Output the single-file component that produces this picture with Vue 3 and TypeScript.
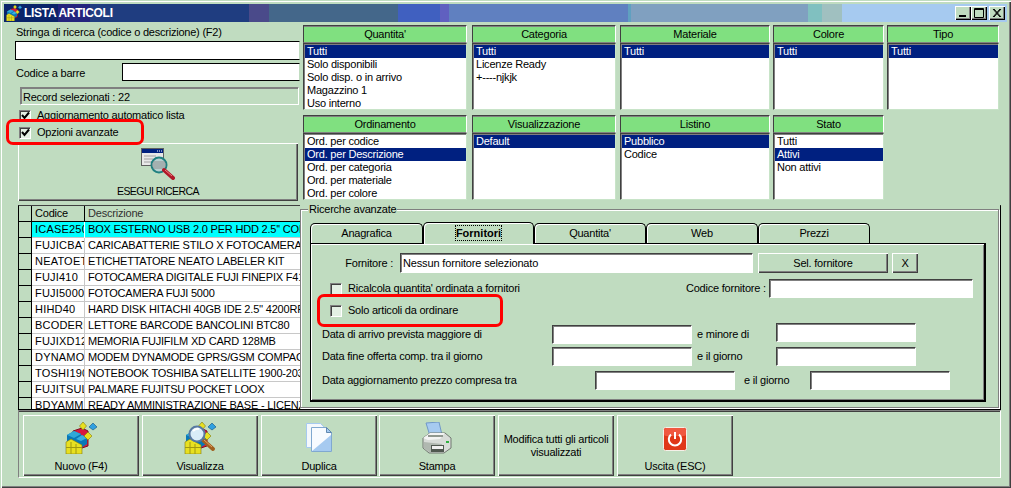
<script setup lang="ts">
const segments: [number, string][] = [
  [54, '#0a246a'], [32, '#24247e'], [159, '#1f3d80'], [20, '#4a4a8a'], [129, '#44678a'],
  [42, '#4060c0'], [9, '#6060c0'], [179, '#6080c0'], [3, '#60a0c0'], [177, '#80a0c0'],
  [14, '#80c0c0'], [20, '#a0c0c0'], [165, '#a6caf0']
]

interface Lista { title: string; width: number; gap: number; items: string[]; sel: number }
const topRow: Lista[] = [
  { title: "Quantita'", width: 164, gap: 5, sel: 0, items: ['Tutti', 'Solo disponibili', 'Solo disp. o in arrivo', 'Magazzino 1', 'Uso interno'] },
  { title: 'Categoria', width: 144, gap: 4, sel: 0, items: ['Tutti', 'Licenze Ready', '+----njkjk'] },
  { title: 'Materiale', width: 150, gap: 3, sel: 0, items: ['Tutti'] },
  { title: 'Colore', width: 111, gap: 3, sel: 0, items: ['Tutti'] },
  { title: 'Tipo', width: 112, gap: 0, sel: 0, items: ['Tutti'] }
]
const bottomRow: Lista[] = [
  { title: 'Ordinamento', width: 164, gap: 5, sel: 1, items: ['Ord. per codice', 'Ord. per Descrizione', 'Ord. per categoria', 'Ord. per materiale', 'Ord. per colore'] },
  { title: 'Visualizzazione', width: 144, gap: 4, sel: 0, items: ['Default'] },
  { title: 'Listino', width: 150, gap: 3, sel: 0, items: ['Pubblico', 'Codice'] },
  { title: 'Stato', width: 111, gap: 0, sel: 1, items: ['Tutti', 'Attivi', 'Non attivi'] }
]

const rows: [string, string][] = [
  ['ICASE250', "BOX ESTERNO USB 2.0 PER HDD 2.5'' CON CAVO"],
  ['FUJICBAT', 'CARICABATTERIE STILO X FOTOCAMERA FUJI'],
  ['NEATOET', 'ETICHETTATORE NEATO LABELER KIT'],
  ['FUJI410', 'FOTOCAMERA DIGITALE FUJI FINEPIX F410'],
  ['FUJI5000', 'FOTOCAMERA FUJI 5000'],
  ['HIHD40', "HARD DISK HITACHI 40GB IDE 2.5'' 4200RPM"],
  ['BCODERI', 'LETTORE BARCODE BANCOLINI BTC80'],
  ['FUJIXD12', 'MEMORIA FUJIFILM XD CARD 128MB'],
  ['DYNAMO', 'MODEM DYNAMODE GPRS/GSM COMPACT'],
  ['TOSHI190', 'NOTEBOOK TOSHIBA SATELLITE 1900-203'],
  ['FUJITSUL', 'PALMARE FUJITSU POCKET LOOX'],
  ['BDYAMM', 'READY AMMINISTRAZIONE BASE - LICENZA']
]

const tabs: [string, number][] = [['Anagrafica', 113], ['Fornitori', 111], ["Quantita'", 112], ['Web', 112], ['Prezzi', 112]]
</script>

<template>
  <div class="win">
    <svg class="defs" width="0" height="0">
      <defs>
        <symbol id="cubes" viewBox="0 0 32 32">
          <polygon points="8,9 17,6 23,9 23,24 17,26 8,20" fill="#d81840" stroke="#801020" stroke-width="1"/>
          <polygon points="2,13 9,9 16,12 16,21 9,25 2,21" fill="#0878b8"/>
          <polygon points="2,13 9,9 16,12 9,16" fill="#30a8d8"/>
          <polygon points="11,17 17,13 22,16 22,22 16,26 11,22" fill="#0878b8"/>
          <polygon points="11,17 17,13 22,16 16,19" fill="#38b0e0"/>
          <polygon points="1,20 6,17 17,23 17,32 1,32" fill="#e8e020" stroke="#807810" stroke-width="0.6"/>
          <path d="M1 25.500H17M6 20V32M11 22V32" stroke="#a09810" fill="none"/>
          <polygon points="18,0 21.500,4 18,8 14.500,4" fill="#e8e020" stroke="#807810" stroke-width="0.6"/>
          <polygon points="28,1 32,5 28,8 24,5" fill="#30a0e0" stroke="#105080" stroke-width="0.6"/>
          <polygon points="23,10 27,14 23,18 19,14" fill="#e8e020" stroke="#807810" stroke-width="0.6"/>
        </symbol>
      </defs>
    </svg>

    <header class="title">
      <div class="title-bg">
        <i v-for="(s, i) in segments" :key="i" :style="{ width: s[0] + 'px', background: s[1] }"></i>
      </div>
      <svg class="title-ico" width="16" height="16"><use href="#cubes"/></svg>
      <span class="title-text">LISTA ARTICOLI</span>
      <div class="ctrls">
        <button class="ctrl"><svg width="14" height="12"><rect x="3" y="8" width="7" height="2" fill="#000"/></svg></button>
        <button class="ctrl"><svg width="14" height="12"><path d="M2.500 1.500h9v9h-9zM2 2.500h10" fill="none" stroke="#000"/></svg></button>
        <button class="ctrl x"><svg width="14" height="12"><path d="M3 2l7 8M4 2l7 8M10 2l-7 8M11 2l-7 8" stroke="#000" fill="none"/></svg></button>
      </div>
    </header>

    <div class="upper">
      <section class="left">
        <label class="lbl-search">Stringa di ricerca (codice o descrizione) (F2)</label>
        <input class="field search" />
        <div class="barcode">
          <label>Codice a barre</label>
          <input class="field code" />
        </div>
        <div class="status">Record selezionati : 22</div>
        <div class="chk-line first"><span class="chk on"><svg width="9" height="9"><path d="M1 4l2.500 3L8 1.500" fill="none" stroke="#000" stroke-width="2"/></svg></span>Aggiornamento automatico lista</div>
        <div class="chk-line second"><span class="chk on"><svg width="9" height="9"><path d="M1 4l2.500 3L8 1.500" fill="none" stroke="#000" stroke-width="2"/></svg></span>Opzioni avanzate</div>
        <button class="raised search-btn">
          <svg width="34" height="32" viewBox="0 0 34 32">
            <rect x="0.500" y="0.500" width="22" height="17" fill="#e8e8e8" stroke="#606060"/>
            <rect x="1" y="1" width="21" height="4" fill="#002080"/>
            <path d="M16 3h1M18 3h1M20 3h1" stroke="#fff"/>
            <path d="M3 8h12M3 11h9M3 14h10" stroke="#a0a0a0"/>
            <circle cx="18" cy="17" r="7.500" fill="#b8d0d0" stroke="#208080" stroke-width="2"/>
            <path d="M12 14h12M11 16h14M11 18h14M12 20h12" stroke="#909090"/>
            <path d="M23 22l9 8" stroke="#b01828" stroke-width="4" stroke-linecap="round"/>
            <path d="M24 22l7 6" stroke="#f08080"/>
          </svg>
          <span>ESEGUI RICERCA</span>
        </button>
      </section>

      <section class="right">
        <div class="list-row">
          <div v-for="l in topRow" :key="l.title" class="list" :style="{ width: l.width + 'px', marginRight: l.gap + 'px' }">
            <div class="list-head">{{ l.title }}</div>
            <ul class="list-body">
              <li v-for="(it, i) in l.items" :key="it" :class="{ sel: i === l.sel }">{{ it }}</li>
            </ul>
          </div>
        </div>
        <div class="list-row second-row">
          <div v-for="l in bottomRow" :key="l.title" class="list" :style="{ width: l.width + 'px', marginRight: l.gap + 'px' }">
            <div class="list-head">{{ l.title }}</div>
            <ul class="list-body">
              <li v-for="(it, i) in l.items" :key="it" :class="{ sel: i === l.sel }">{{ it }}</li>
            </ul>
          </div>
        </div>
      </section>
    </div>

    <div class="grid-wrap">
      <div class="grid">
        <div class="g-row head">
          <span class="g-ind"></span><span class="g-code">Codice</span><span class="g-desc">Descrizione</span>
        </div>
        <div v-for="(r, i) in rows" :key="r[0]" class="g-row" :class="{ cur: i === 0 }">
          <span class="g-ind"></span><span class="g-code">{{ r[0] }}</span><span class="g-desc">{{ r[1] }}</span>
        </div>
      </div>

      <section class="adv">
        <div class="frame">
          <span class="legend">Ricerche avanzate</span>
          <div class="tabs">
            <div v-for="(t, i) in tabs" :key="t[0]" class="tab" :class="{ active: i === 1 }" :style="{ width: t[1] + 'px' }">
              <span>{{ t[0] }}</span>
            </div>
          </div>
          <div class="tab-page">
            <div class="f-row r1">
              <span class="f-lab">Fornitore :</span>
              <input class="field sup" value="Nessun fornitore selezionato" />
              <button class="raised small selbtn">Sel. fornitore</button>
              <button class="raised small xb">X</button>
            </div>
            <div class="f-row r2">
              <span class="chk-line inner w364"><span class="chk"></span>Ricalcola quantita' ordinata a fornitori</span>
              <span class="cod-lab">Codice fornitore :</span>
              <input class="field cod" />
            </div>
            <div class="f-row r3">
              <span class="chk-line inner"><span class="chk"></span>Solo articoli da ordinare</span>
            </div>
            <div class="f-row r4">
              <span class="d-lab">Data di arrivo prevista maggiore di</span>
              <input class="field d" />
              <span class="d-mid">e minore di</span>
              <input class="field d up2" />
            </div>
            <div class="f-row r5">
              <span class="d-lab">Data fine offerta comp. tra il giorno</span>
              <input class="field d" />
              <span class="d-mid">e il giorno</span>
              <input class="field d" />
            </div>
            <div class="f-row r6">
              <span class="d-lab long">Data aggiornamento prezzo compresa tra</span>
              <input class="field d" />
              <span class="d-mid2">e il giorno</span>
              <input class="field d" />
            </div>
          </div>
        </div>
      </section>
    </div>

    <footer class="bar">
      <button class="raised big">
        <svg width="32" height="32"><use href="#cubes"/></svg>
        <span>Nuovo (F4)</span>
      </button>
      <button class="raised big">
        <svg width="32" height="32" viewBox="0 0 32 32">
          <use href="#cubes" width="32" height="32"/>
          <path d="M19 18l10 9" stroke="#a06020" stroke-width="4" stroke-linecap="round"/>
          <path d="M20 18l8 7" stroke="#e8a060"/>
          <circle cx="13" cy="12" r="7.500" fill="#d8ecf8" stroke="#5878a0" stroke-width="2"/>
          <path d="M9 9q3-3 6-2" stroke="#fff" stroke-width="2" fill="none"/>
        </svg>
        <span>Visualizza</span>
      </button>
      <button class="raised big">
        <svg width="28" height="32" viewBox="0 0 28 32">
          <path d="M1.500 1.500h14l5 5v19h-19z" fill="#f4f8fc" stroke="#a6caf0"/>
          <path d="M6.500 5.500h15l5 5v19h-20z" fill="#f8fbff" stroke="#80a8d0"/>
          <path d="M26 13v16H7z" fill="#a6caf0"/>
          <path d="M21.500 5.500v5h5z" fill="#a6caf0" stroke="#6088b0"/>
        </svg>
        <span>Duplica</span>
      </button>
      <button class="raised big">
        <svg width="30" height="32" viewBox="0 0 30 32">
          <polygon points="4,1 17,0 20,13 8,14" fill="#a6caf0" stroke="#7098c8"/>
          <polygon points="1,16 8,11 23,11 29,16 29,26 22,31 7,31 1,26" fill="#d8dcd8" stroke="#707870"/>
          <polygon points="1,16 8,11 23,11 18,17 6,18" fill="#f4f4f4"/>
          <rect x="6" y="13" width="15" height="2" fill="#909890"/>
          <polygon points="2,20 20,22 20,30 7,30 2,26" fill="#b0b8b0"/>
          <rect x="9" y="23" width="13" height="7" fill="#505850"/>
          <rect x="10" y="24" width="11" height="3" fill="#f0f0f0"/>
          <rect x="24" y="19" width="3" height="2" fill="#30b040"/>
        </svg>
        <span>Stampa</span>
      </button>
      <button class="raised big text-only">Modifica tutti gli articoli visualizzati</button>
      <button class="raised big">
        <svg class="power" width="24" height="24" viewBox="0 0 24 24">
          <rect x="0.500" y="0.500" width="23" height="23" rx="2" fill="#e03818" stroke="#f4f0e8"/>
          <rect x="1" y="1" width="22" height="8" rx="2" fill="#f05840"/>
          <path d="M8 7.500a6.200 6.200 0 1 0 8 0" fill="none" stroke="#fff" stroke-width="2"/>
          <path d="M12 5v7" stroke="#fff" stroke-width="2"/>
        </svg>
        <span>Uscita (ESC)</span>
      </button>
    </footer>

    <div class="ring ring-a"></div>
    <div class="ring ring-b"></div>
  </div>
</template>

<style>
html, body { margin: 0; background: #c0dcc0; }
</style>

<style scoped>
.win {
  position: relative;
  width: 1011px;
  height: 488px;
  box-sizing: border-box;
  overflow: hidden;
  background: #c0dcc0;
  padding: 4px 4px 0;
  font: 11px/13px "Liberation Sans", Arial, sans-serif;
  letter-spacing: -0.22px;
  color: #000;
  box-shadow: inset 1px 1px 0 #c0dcc0, inset 2px 2px 0 #fff, inset -1px -1px 0 #404040, inset -2px -2px 0 #808080;
}
.defs { position: absolute; }
* { box-sizing: border-box; }

.title { position: relative; height: 18px; display: flex; align-items: center; }
.title-bg { position: absolute; inset: 0; display: flex; }
.title-bg i { display: block; height: 18px; flex: none; }
.title-ico { position: relative; margin-left: 2px; }
.title-text { position: relative; margin-left: 2px; font-weight: 700; font-size: 12px; letter-spacing: -0.3px; color: #fff; }
.ctrls { position: relative; margin-left: auto; margin-right: 2px; display: flex; }
.ctrl {
  width: 16px; height: 14px; padding: 0; margin: 0; border: 0; background: #c0dcc0;
  box-shadow: inset 1px 1px 0 #fff, inset -1px -1px 0 #000, inset -2px -2px 0 #808080;
  display: flex; align-items: center; justify-content: center;
}
.ctrl.x { margin-left: 2px; }

.upper { display: flex; height: 183px; }
.left { width: 299px; flex: none; padding-left: 11px; display: flex; flex-direction: column; }
.lbl-search { margin: 4px 0 0 1px; height: 13px; }
.field {
  display: block; height: 19px; padding: 0 2px; margin: 0;
  font: 11px/13px "Liberation Sans", Arial, sans-serif; letter-spacing: -0.15px;
  background: #fff; border: 1px solid; border-color: #404040 #fff #fff #404040;
  box-shadow: inset 1px 1px 0 #808080; outline: 0; border-radius: 0; color: #000;
}
.search { width: 285px; margin-top: 2px; border-color: #000 #c0dcc0 #000 #000; box-shadow: none; }
.barcode { display: flex; align-items: center; margin-top: 3px; height: 18px; }
.barcode label { width: 107px; padding-left: 1px; margin-top: 2px; }
.code { width: 178px; height: 18px; border-color: #000 #c0dcc0 #000 #000; box-shadow: none; }
.status {
  margin: 6px 0 0 5px; width: 279px; height: 18px; padding: 3px 2px 0;
  border: 1px solid; border-color: #808080 #fff #fff #808080;
  box-shadow: inset 1px 1px 0 #808080;
}
.chk-line { display: flex; align-items: center; }
.chk-line.first { margin: 4px 0 0 4px; height: 13px; }
.chk-line.second { margin: 4px 0 0 4px; height: 13px; }
.chk {
  width: 12px; height: 12px; margin-right: 6px; flex: none; background: #e4f0e4;
  border: 1px solid; border-color: #808080 #fff #fff #808080; box-shadow: inset 1px 1px 0 #404040;
  display: flex; align-items: center; justify-content: center;
}
.raised {
  background: #c0dcc0; border: 0; padding: 0; margin: 0; color: #000;
  font: 11px/13px "Liberation Sans", Arial, sans-serif; letter-spacing: -0.22px;
  box-shadow: inset 1px 1px 0 #fff, inset -1px -1px 0 #404040, inset -2px -2px 0 #808080;
}
.search-btn {
  margin: 4px 0 0 3px; width: 280px; height: 58px; display: flex; flex-direction: column; align-items: center;
  padding-top: 5px;
}
.search-btn span { margin-top: 5px; font-size: 10.5px; letter-spacing: -0.55px; }

.right { flex: none; width: 704px; }
.list-row { display: flex; margin-top: 3px; }
.second-row { margin-top: 5px; }
.list { height: 85px; flex: none; display: flex; flex-direction: column; }
.list-head {
  height: 18px; line-height: 16px; text-align: center; background: #80e080;
  border-style: solid; border-width: 1px; border-color: #404040 #fff #808080 #404040;
  box-shadow: inset 0 1px 0 #808080;
}
.list-body {
  list-style: none; margin: 0; padding: 1px 0 0; height: 67px; flex: none; background: #fff; overflow: hidden;
  border: 1px solid; border-color: #404040 #c8e4c8 #c8e4c8 #404040;
  box-shadow: inset 1px 1px 0 #808080;
}
.list-body li { height: 13px; padding-left: 2px; line-height: 13px; white-space: nowrap; margin-left: 1px; }
.list-body li.sel { background: #002080; color: #fff; }

.grid-wrap { position: relative; height: 205px; }
.grid {
  margin-left: 14px; width: 983px; height: 205px; overflow: hidden; background: #fff;
  border: 1px solid #000; border-top-color: #404040;
}
.g-row { display: flex; height: 16px; line-height: 15px; letter-spacing: -0.2px; white-space: nowrap; border-bottom: 1px solid #c8c8c8; }
.g-row span { display: block; overflow: hidden; height: 16px; padding-left: 3px; border-right: 1px solid #c8c8c8; }
.g-ind { width: 13px; background: #c0dcc0; border-right: 1px solid #000 !important; border-bottom: 1px solid #000; }
.g-row .g-code { width: 53px; flex: none; letter-spacing: 0.2px; }
.g-desc { flex: 1; color: #000; }
.head { background: #c0dcc0; border-bottom: 1px solid #000; }
.head span { border-right: 1px solid #000; }
.head .g-desc { color: #303030; border-right: 0; }
.g-row.head .g-code { letter-spacing: -0.2px; }
.cur { background: #00ffff; }
.cur .g-code, .cur .g-desc { border-right-color: #fff; }

.adv {
  position: absolute; left: 296px; top: 0; width: 700px; height: 204px;
  background: #c0dcc0; padding-top: 4px;
}
.frame {
  position: relative; width: 699px; height: 199px;
  border: 1px solid #808080; box-shadow: 1px 1px 0 #fff, inset 1px 1px 0 #fff;
}
.legend {
  position: absolute; left: 7px; top: -7px; padding: 0 1px; height: 13px; line-height: 13px;
  background: #c0dcc0; white-space: nowrap;
}
.tabs { display: flex; margin: 12px 0 0 9px; height: 21px; }
.tab {
  flex: none; height: 20px; margin-top: 1px; text-align: center; line-height: 19px;
  border: 1px solid #000; border-bottom: 0; border-radius: 5px 5px 0 0;
  box-shadow: inset 1px 1px 0 #fff;
}
.tab.active {
  position: relative; z-index: 1; height: 22px; margin-top: 0; line-height: 21px; background: #c0dcc0;
  font-weight: 700; letter-spacing: 0;
}
.tab.active span { outline: 1px dotted #000; padding: 1px 0; }
.tab-page {
  margin-left: 9px; width: 676px; height: 159px; padding: 9px 0 0 11px;
  border: 1px solid #000; border-width: 1px 2px 2px 1px;
  box-shadow: inset 1px 1px 0 #fff, inset -1px -1px 0 #808080;
}
.f-row { display: flex; align-items: center; }
.r1 { height: 20px; }
.f-lab { width: 71px; text-align: right; margin-right: 7px; white-space: nowrap; }
.sup { width: 353px; height: 20px; margin-right: 5px; }
.small { height: 20px; }
.selbtn { width: 130px; margin-right: 4px; }
.xb { width: 26px; }
.r2 { height: 19px; margin-top: 6px; }
.chk-line.inner { margin-left: 8px; }
.w364 { width: 356px; flex: none; }
.cod-lab { width: 83px; flex: none; white-space: nowrap; }
.cod { width: 204px; }
.r3 { height: 13px; margin-top: 6px; }
.r4 { height: 19px; margin-top: 8px; }
.r5 { height: 19px; margin-top: 3px; }
.r6 { height: 19px; margin-top: 5px; }
.d { width: 140px; }
.up2 { position: relative; top: -2px; }
.d-lab { width: 230px; flex: none; white-space: nowrap; }
.d-lab.long { width: 273px; }
.d-mid { width: 84px; flex: none; padding-left: 5px; white-space: nowrap; }
.d-mid2 { width: 75px; flex: none; padding-left: 9px; white-space: nowrap; }

.bar {
  margin: 0 0 0 14px; width: 983px; height: 68px; padding: 4px 0 0 4px; display: flex; gap: 3px;
  border: 1px solid; border-color: #808080 #fff #fff #808080;
  box-shadow: inset 0 1px 0 #404040;
}
.big { width: 116px; height: 61px; flex: none; display: flex; flex-direction: column; align-items: center; padding-top: 7px; position: relative; }
.big:nth-child(3) { margin-right: -1px; }
.big span { position: absolute; left: 0; right: 0; top: 45px; text-align: center; }
.text-only { justify-content: center; padding: 0 2px; text-align: center; }
.power { margin-top: 5px; }

.ring { position: absolute; border: 3px solid #f00; border-radius: 7px; pointer-events: none; }
.ring-a { left: 6px; top: 119px; width: 138px; height: 26px; }
.ring-b { left: 317px; top: 294px; width: 186px; height: 33px; }
</style>
